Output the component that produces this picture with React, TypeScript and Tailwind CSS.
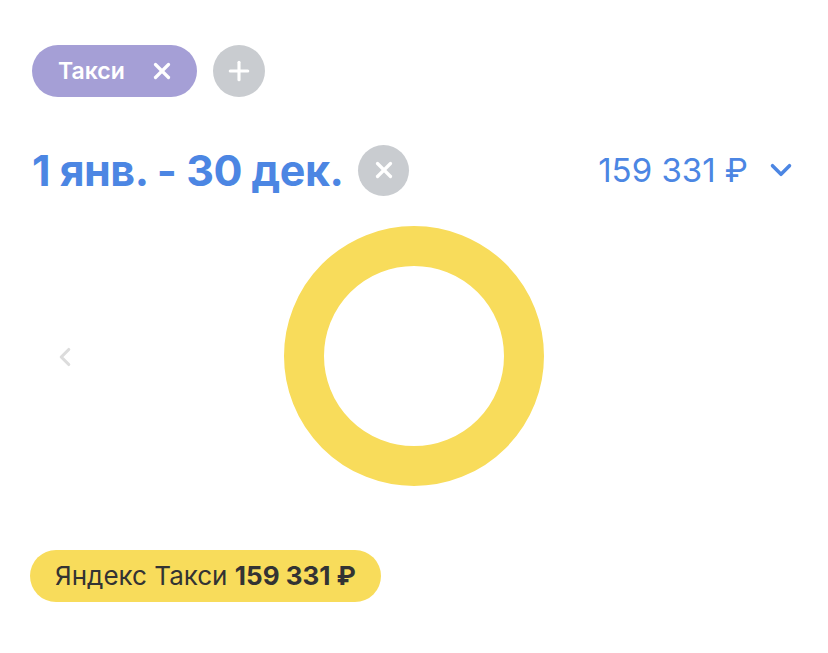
import { X, Plus, ChevronDown, ChevronLeft } from 'lucide-react';

const font = { fontFamily: 'Inter, "Noto Sans", sans-serif' };

export default function App() {
  return (
    <div className="w-[828px] h-[653px] bg-white overflow-hidden" style={font}>
      {/* Фильтры категорий */}
      <div className="flex items-center gap-4 pl-8 pt-[45px]">
        <div className="h-[52px] flex items-center gap-[24px] rounded-full bg-[#a59fd6] pl-[26px] pr-[22px]">
          <span className="text-white text-[23px] font-semibold">Такси</span>
          <X className="w-[26px] h-[26px] text-white" strokeWidth={3} />
        </div>
        <button className="w-[52px] h-[52px] rounded-full bg-[#c9ccd0] flex items-center justify-center">
          <Plus className="w-[30px] h-[30px] text-white" strokeWidth={2.5} />
        </button>
      </div>

      {/* Период и сумма */}
      <div className="flex items-center justify-between pl-8 pr-[30px] mt-[41px]">
        <div className="flex items-center gap-[15px]">
          <span className="text-[#4c86e3] text-[43px] font-bold tracking-[-0.5px]">1 янв. - 30 дек.</span>
          <button className="w-[51px] h-[51px] rounded-full bg-[#c9ccd0] flex items-center justify-center">
            <X className="w-[26px] h-[26px] text-white" strokeWidth={3} />
          </button>
        </div>
        <div className="flex items-center gap-[16px] text-[#4c86e3]">
          <span className="text-[33px] font-normal">159 331 ₽</span>
          <ChevronDown className="w-[34px] h-[34px]" strokeWidth={2.5} />
        </div>
      </div>

      {/* Диаграмма */}
      <div className="relative flex items-center justify-center mt-[22px] h-[262px]">
        <ChevronLeft className="absolute left-[50px] top-[117px] w-[30px] h-[30px] text-[#dcdcdc]" strokeWidth={2.5} />
        <svg width="262" height="262" viewBox="0 0 262 262">
          <circle cx="131" cy="131" r="110" fill="none" stroke="#f8dc5b" strokeWidth="40" />
        </svg>
      </div>

      {/* Легенда */}
      <div className="pl-[30px] mt-[63px]">
        <div className="inline-flex items-center h-[52px] rounded-full bg-[#f8dc5b] px-[25px] text-[26px] text-[#333]">
          <span>Яндекс Такси&nbsp;</span>
          <span className="font-bold">159 331 ₽</span>
        </div>
      </div>
    </div>
  );
}
